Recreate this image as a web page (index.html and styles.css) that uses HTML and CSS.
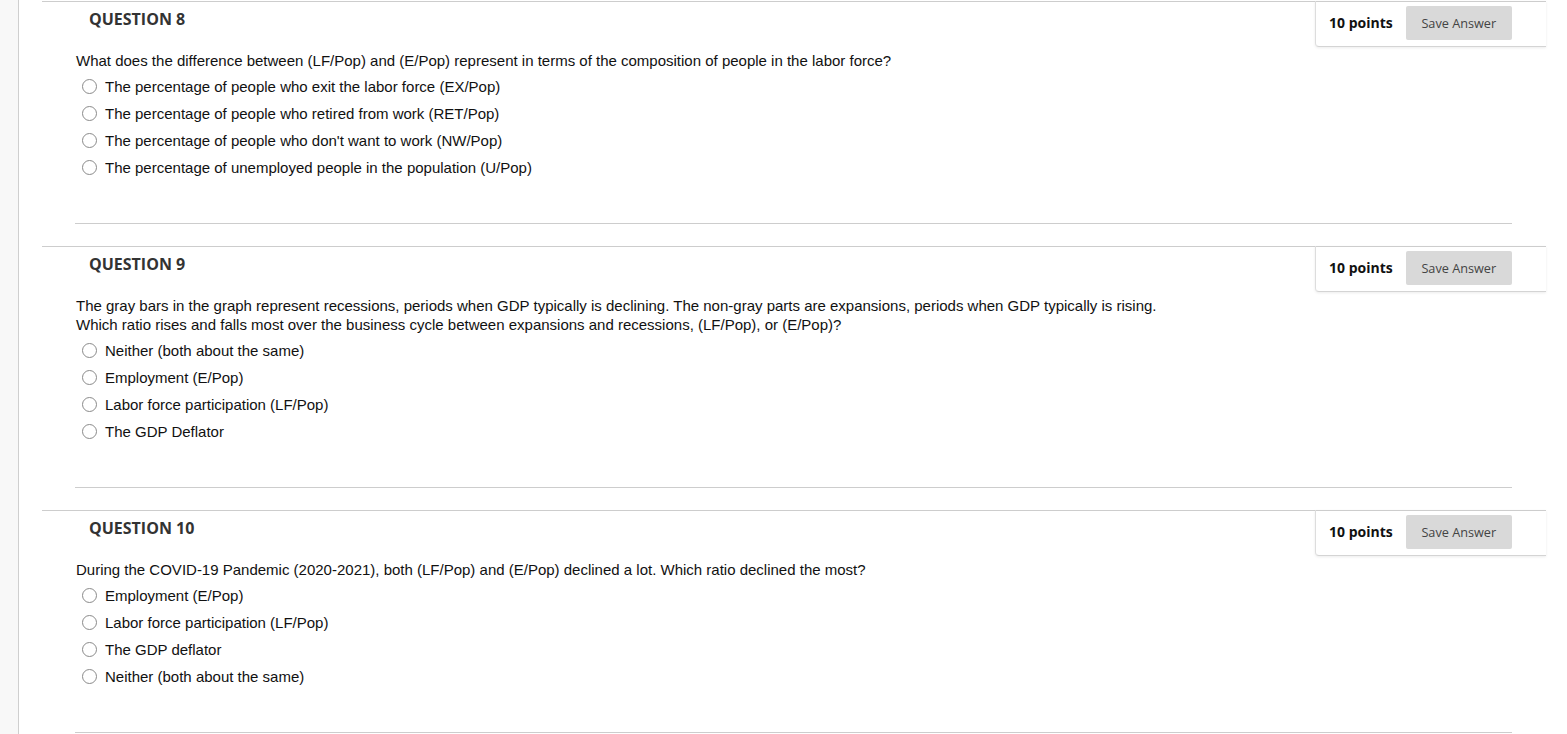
FILE: index.html
```html
<!DOCTYPE html>
<html>
<head>
<meta charset="utf-8">
<link rel="stylesheet" href="styles.css">
</head>
<body>
<div class="page">
  <div class="sidebar"></div>
  <div class="content">
    <section class="question">
      <div class="q-head">
        <h3 class="q-title">QUESTION 8</h3>
        <div class="points-box">
          <span class="points">10 points</span>
          <button class="save">Save Answer</button>
        </div>
      </div>
      <div class="q-body">
        <p class="q-text">What does the difference between (LF/Pop) and (E/Pop) represent in terms of the composition of people in the labor force?</p>
        <ul class="options">
          <li><span class="radio"></span>The percentage of people who exit the labor force (EX/Pop)</li>
          <li><span class="radio"></span>The percentage of people who retired from work (RET/Pop)</li>
          <li><span class="radio"></span>The percentage of people who don't want to work (NW/Pop)</li>
          <li><span class="radio"></span>The percentage of unemployed people in the population (U/Pop)</li>
        </ul>
      </div>
    </section>
    <section class="question">
      <div class="q-head">
        <h3 class="q-title">QUESTION 9</h3>
        <div class="points-box">
          <span class="points">10 points</span>
          <button class="save">Save Answer</button>
        </div>
      </div>
      <div class="q-body">
        <p class="q-text">The gray bars in the graph represent recessions, periods when GDP typically is declining. The non-gray parts are expansions, periods when GDP typically is rising.<br>Which ratio rises and falls most over the business cycle between expansions and recessions, (LF/Pop), or (E/Pop)?</p>
        <ul class="options">
          <li><span class="radio"></span>Neither (both about the same)</li>
          <li><span class="radio"></span>Employment (E/Pop)</li>
          <li><span class="radio"></span>Labor force participation (LF/Pop)</li>
          <li><span class="radio"></span>The GDP Deflator</li>
        </ul>
      </div>
    </section>
    <section class="question">
      <div class="q-head">
        <h3 class="q-title">QUESTION 10</h3>
        <div class="points-box">
          <span class="points">10 points</span>
          <button class="save">Save Answer</button>
        </div>
      </div>
      <div class="q-body">
        <p class="q-text">During the COVID-19 Pandemic (2020-2021), both (LF/Pop) and (E/Pop) declined a lot. Which ratio declined the most?</p>
        <ul class="options">
          <li><span class="radio"></span>Employment (E/Pop)</li>
          <li><span class="radio"></span>Labor force participation (LF/Pop)</li>
          <li><span class="radio"></span>The GDP deflator</li>
          <li><span class="radio"></span>Neither (both about the same)</li>
        </ul>
      </div>
    </section>
  </div>
</div>
</body>
</html>
```

FILE: styles.css
```css
html, body {
  margin: 0;
  padding: 0;
  background: #fff;
  height: 100%;
  overflow: hidden;
}

.page {
  display: flex;
  min-height: 100vh;
}

.sidebar {
  width: 18px;
  flex: 0 0 18px;
  background: #f8f8f8;
  border-right: 1px solid #cfcfcf;
}

.content {
  padding-left: 23px;
  padding-top: 1px;
  width: 1504px;
}

.question {
  border-top: 1px solid #cdcdcd;
  margin-bottom: 22px;
}

.q-head {
  display: flex;
  justify-content: space-between;
  align-items: flex-start;
  height: 46px;
}

.q-title {
  margin: 0;
  padding: 6px 0 0 47px;
  font-family: "Open Sans", sans-serif;
  font-weight: 700;
  font-size: 16px;
  line-height: 22px;
  color: #333;
}

.points-box {
  display: flex;
  align-items: center;
  box-sizing: border-box;
  width: 231px;
  height: 46px;
  margin-top: -1px;
  padding: 0 34px 2px 13px;
  border-left: 1px solid #ddd;
  border-bottom: 1px solid #d4d4d4;
  border-bottom-left-radius: 4px;
  box-shadow: 0 1px 3px rgba(0, 0, 0, 0.08);
}

.points {
  font-family: "Open Sans", sans-serif;
  font-weight: 700;
  font-size: 14px;
  color: #111;
  width: 77px;
}

.save {
  width: 107px;
  height: 34px;
  border: none;
  border-radius: 2px;
  background: #d9d9d9;
  font-family: "Open Sans", sans-serif;
  font-size: 12.7px;
  color: #444;
  padding: 0;
}

.q-body {
  margin: 0 34px 0 33px;
  padding: 3px 0 42px 1px;
  border-bottom: 1px solid #cdcdcd;
}

.q-text {
  margin: 0 0 3px 0;
  font-family: "Liberation Sans", Arial, sans-serif;
  font-size: 15px;
  line-height: 19px;
  color: #111;
}

.options {
  list-style: none;
  margin: 0;
  padding: 0;
}

.options li {
  display: flex;
  align-items: center;
  height: 27px;
  font-family: "Liberation Sans", Arial, sans-serif;
  font-size: 15px;
  color: #111;
}

.radio {
  box-sizing: border-box;
  width: 15px;
  height: 15px;
  border: 1px solid #8a8a8a;
  border-radius: 50%;
  margin: 0 8px 0 6px;
  background: #fff;
}
```
